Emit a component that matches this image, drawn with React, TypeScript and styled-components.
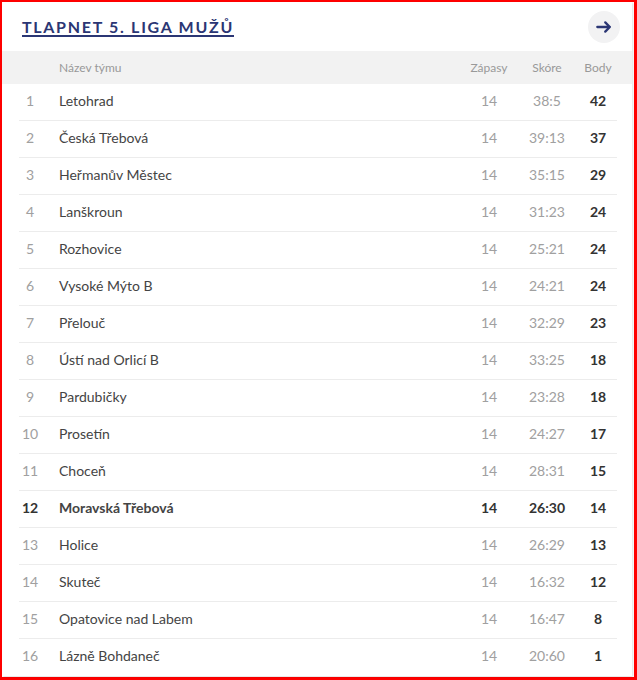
import React from "react";
import styled, { createGlobalStyle, css } from "styled-components";

type TeamRow = {
  rank: number;
  name: string;
  played: number;
  score: string;
  points: number;
  highlight?: boolean;
};

const rows: TeamRow[] = [
  { rank: 1, name: "Letohrad", played: 14, score: "38:5", points: 42 },
  { rank: 2, name: "Česká Třebová", played: 14, score: "39:13", points: 37 },
  { rank: 3, name: "Heřmanův Městec", played: 14, score: "35:15", points: 29 },
  { rank: 4, name: "Lanškroun", played: 14, score: "31:23", points: 24 },
  { rank: 5, name: "Rozhovice", played: 14, score: "25:21", points: 24 },
  { rank: 6, name: "Vysoké Mýto B", played: 14, score: "24:21", points: 24 },
  { rank: 7, name: "Přelouč", played: 14, score: "32:29", points: 23 },
  { rank: 8, name: "Ústí nad Orlicí B", played: 14, score: "33:25", points: 18 },
  { rank: 9, name: "Pardubičky", played: 14, score: "23:28", points: 18 },
  { rank: 10, name: "Prosetín", played: 14, score: "24:27", points: 17 },
  { rank: 11, name: "Choceň", played: 14, score: "28:31", points: 15 },
  { rank: 12, name: "Moravská Třebová", played: 14, score: "26:30", points: 14, highlight: true },
  { rank: 13, name: "Holice", played: 14, score: "26:29", points: 13 },
  { rank: 14, name: "Skuteč", played: 14, score: "16:32", points: 12 },
  { rank: 15, name: "Opatovice nad Labem", played: 14, score: "16:47", points: 8 },
  { rank: 16, name: "Lázně Bohdaneč", played: 14, score: "20:60", points: 1 },
];

const GlobalStyle = createGlobalStyle`
  body {
    margin: 0;
    font-family: Lato, "Open Sans", sans-serif;
    background: #fff;
  }
`;

const Frame = styled.div`
  width: 637px;
  height: 680px;
  box-sizing: border-box;
  border: 2px solid #ff0000;
  border-right-width: 3px;
  border-bottom-width: 3px;
  background: #fff;
`;

const Card = styled.section`
  width: 630px;
  height: 674px;
  background: #fff;
  box-shadow: 1px 1px 2px rgba(0, 0, 0, 0.12);
  overflow: hidden;
`;

const CardHeader = styled.div`
  height: 49px;
  display: flex;
  align-items: center;
  justify-content: space-between;
  padding: 0 12px 0 20px;
`;

const Title = styled.h2`
  margin: 0;
  font-size: 16px;
  line-height: 20px;
  font-weight: 700;
  letter-spacing: 1.7px;
  color: #2b3674;
  text-decoration: underline;
  text-decoration-thickness: 2px;
  text-underline-offset: 2px;
  padding-top: 1px;
`;

const ArrowButton = styled.button`
  width: 32px;
  height: 32px;
  border-radius: 50%;
  border: none;
  background: #f2f2f3;
  display: flex;
  align-items: center;
  justify-content: center;
  padding: 0;
  color: #2b3674;
  cursor: pointer;
`;

const grid = css`
  display: grid;
  grid-template-columns: 22px 1fr 52px 64px 38px;
  align-items: center;
`;

const HeadRow = styled.div`
  ${grid};
  height: 33px;
  background: #f2f2f2;
  padding: 0 15px 0 17px;
  font-size: 12px;
  color: #999;
`;

const Row = styled.div<{ $bold?: boolean }>`
  ${grid};
  box-sizing: border-box;
  height: 37px;
  padding-bottom: 4px;
  margin: 0 15px 0 17px;
  border-bottom: 1px solid #ececec;
  font-size: 14px;
  color: ${(p) => (p.$bold ? "#333" : "#a0a0a0")};
  font-weight: ${(p) => (p.$bold ? 700 : 400)};

  &:last-child {
    border-bottom: none;
  }
`;

const Cell = styled.div<{ $align?: "left" | "center"; $tone?: "name" | "points" }>`
  text-align: ${(p) => p.$align ?? "center"};
  white-space: nowrap;
  ${(p) => p.$tone === "name" && "padding-left: 18px; color: #444;"}
  ${(p) => p.$tone === "points" && "color: #333; font-weight: 700;"}
`;

const HeadCell = styled.div<{ $align?: "left" | "center" }>`
  text-align: ${(p) => p.$align ?? "center"};
  ${(p) => p.$align === "left" && "padding-left: 18px;"}
`;

const ArrowIcon = () => (
  <svg width="20" height="20" viewBox="0 0 24 24" fill="none">
    <path
      d="M4 12h15M13.5 6.5L19 12l-5.5 5.5"
      stroke="currentColor"
      strokeWidth="2.8"
      strokeLinecap="round"
      strokeLinejoin="round"
    />
  </svg>
);

const App = () => {
  return (
    <Frame>
      <GlobalStyle />
      <Card>
        <CardHeader>
          <Title>TLAPNET 5. LIGA MUŽŮ</Title>
          <ArrowButton aria-label="Zobrazit tabulku">
            <ArrowIcon />
          </ArrowButton>
        </CardHeader>

        <HeadRow>
          <HeadCell />
          <HeadCell $align="left">Název týmu</HeadCell>
          <HeadCell>Zápasy</HeadCell>
          <HeadCell>Skóre</HeadCell>
          <HeadCell>Body</HeadCell>
        </HeadRow>

        {rows.map((row) => (
          <Row key={row.rank} $bold={row.highlight}>
            <Cell>{row.rank}</Cell>
            <Cell $align="left" $tone="name">
              {row.name}
            </Cell>
            <Cell>{row.played}</Cell>
            <Cell>{row.score}</Cell>
            <Cell $tone="points">{row.points}</Cell>
          </Row>
        ))}
      </Card>
    </Frame>
  );
};

export default App;
